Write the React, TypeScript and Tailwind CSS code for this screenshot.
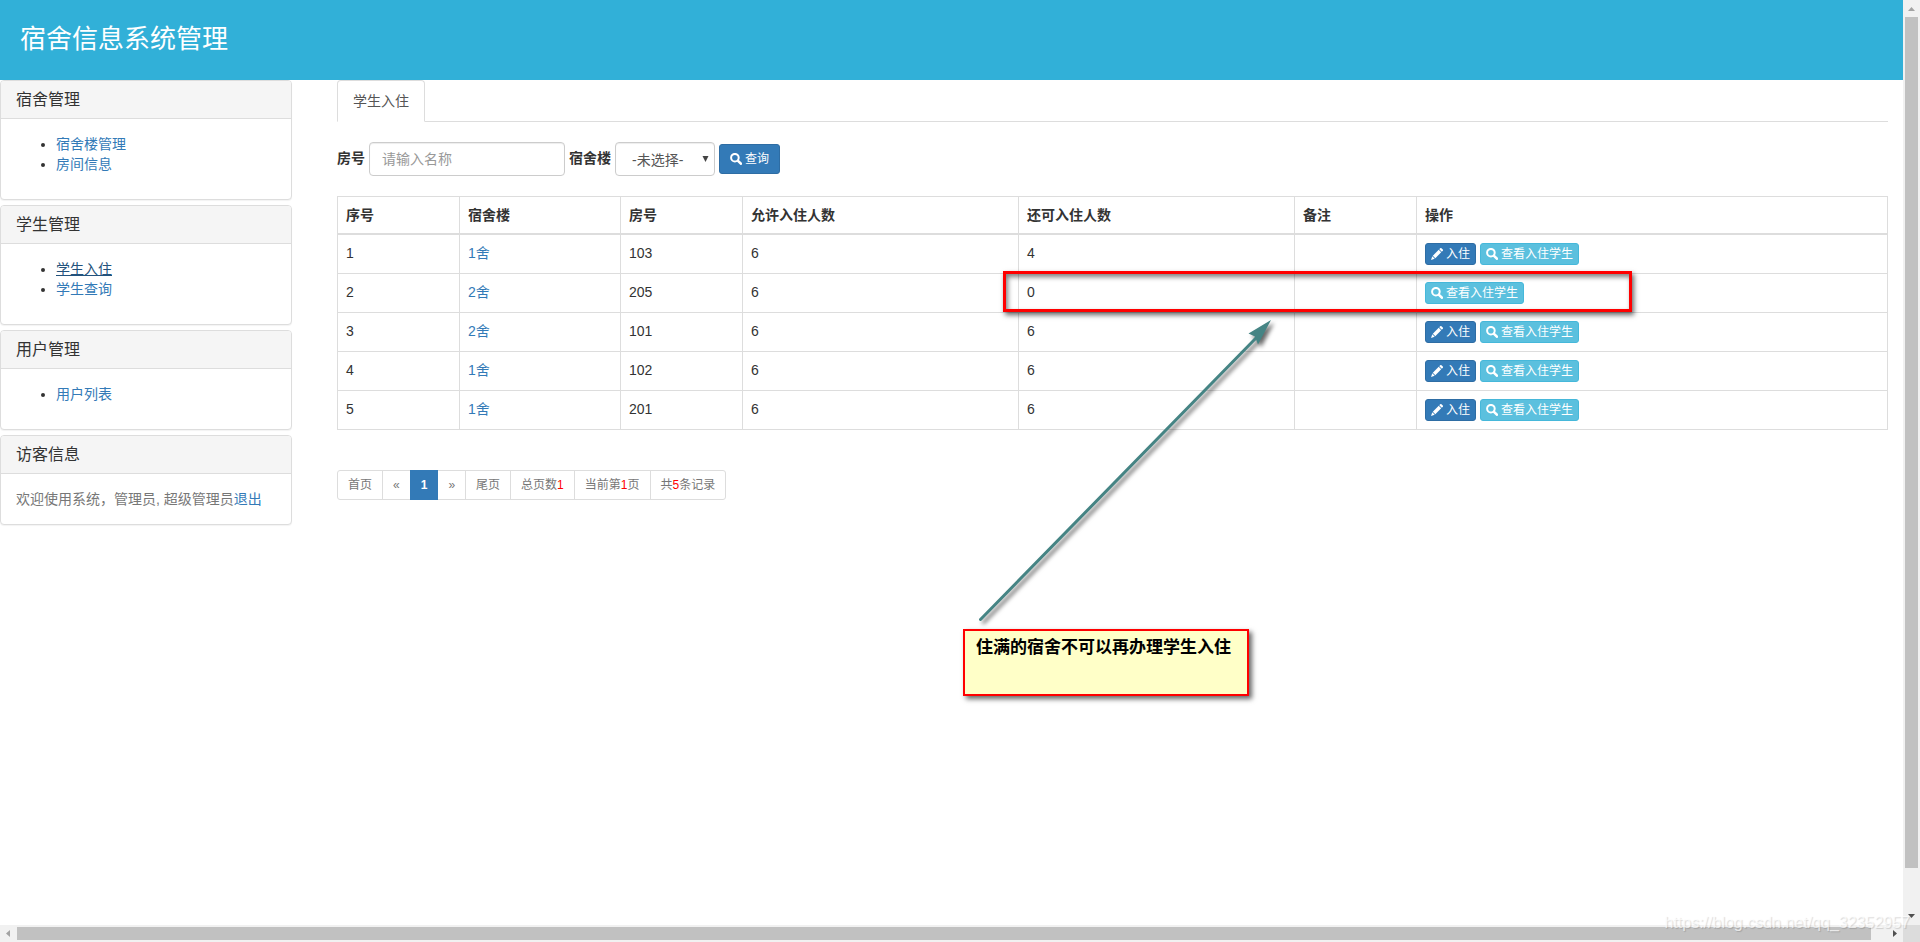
import type { ReactNode } from 'react'

interface Room {
  id: number
  building: string
  room: string
  capacity: number
  free: number
  remark: string
}

const ROOMS: Room[] = [
  { id: 1, building: '1舍', room: '103', capacity: 6, free: 4, remark: '' },
  { id: 2, building: '2舍', room: '205', capacity: 6, free: 0, remark: '' },
  { id: 3, building: '2舍', room: '101', capacity: 6, free: 6, remark: '' },
  { id: 4, building: '1舍', room: '102', capacity: 6, free: 6, remark: '' },
  { id: 5, building: '1舍', room: '201', capacity: 6, free: 6, remark: '' },
]

const MENUS = [
  { title: '宿舍管理', links: ['宿舍楼管理', '房间信息'] },
  { title: '学生管理', links: ['学生入住', '学生查询'] },
  { title: '用户管理', links: ['用户列表'] },
]

const ACTIVE_LINK = '学生入住'

const HEADERS = ['序号', '宿舍楼', '房号', '允许入住人数', '还可入住人数', '备注', '操作']

function SearchIcon() {
  return (
    <svg viewBox="0 0 12 12" className="h-3 w-3 shrink-0" aria-hidden="true">
      <circle cx="4.9" cy="4.7" r="3.8" fill="none" stroke="currentColor" strokeWidth="2" />
      <path d="M8 7.8 10.9 10.7" stroke="currentColor" strokeWidth="2.6" strokeLinecap="round" />
    </svg>
  )
}

function PencilIcon() {
  return (
    <svg viewBox="0 0 12 12" className="h-3 w-3 shrink-0" fill="currentColor" aria-hidden="true">
      <path d="M9.3.2a.8.8 0 0 1 1.1 0l1.4 1.4a.8.8 0 0 1 0 1.1l-1 1L8.3 1.2z" />
      <path d="M7.7 1.8 10.2 4.3 4.3 10.2 1.8 7.7z" />
      <path d="M1.3 8.3 3.7 10.7 0 12z" />
    </svg>
  )
}

function Panel({ title, children }: { title: string; children: ReactNode }) {
  return (
    <section className="rounded border border-[#ddd] bg-white shadow-[0_1px_1px_rgba(0,0,0,0.05)]">
      <h3 className="rounded-t-[3px] border-b border-[#ddd] bg-[#f5f5f5] px-[15px] py-[10px] text-base leading-[17px]">
        {title}
      </h3>
      <div className="p-[15px]">{children}</div>
    </section>
  )
}

function Sidebar() {
  return (
    <aside className="flex w-[292px] shrink-0 flex-col gap-[5px]">
      {MENUS.map(({ title, links }) => (
        <Panel key={title} title={title}>
          <ul className="mb-[10px] list-disc pl-10">
            {links.map((link) => (
              <li key={link}>
                <a href="#" className={link === ACTIVE_LINK ? 'text-[#23527c] underline' : 'text-[#337ab7]'}>
                  {link}
                </a>
              </li>
            ))}
          </ul>
        </Panel>
      ))}
      <Panel title="访客信息">
        <p className="text-[#777]">
          欢迎使用系统，管理员, 超级管理员<a href="#" className="text-[#337ab7]">退出</a>
        </p>
      </Panel>
    </aside>
  )
}

function SearchForm() {
  return (
    <form className="mt-5 flex items-center gap-1" onSubmit={(e) => e.preventDefault()}>
      <label htmlFor="room" className="pb-0.5 font-bold">房号</label>
      <input
        id="room"
        type="text"
        placeholder="请输入名称"
        className="h-[34px] w-[196px] rounded border border-[#ccc] px-3 text-[#555] shadow-[inset_0_1px_1px_rgba(0,0,0,0.075)] placeholder:text-[#999]"
      />
      <label htmlFor="building" className="pb-0.5 font-bold">宿舍楼</label>
      <div className="relative">
        <select
          id="building"
          className="h-[34px] w-[100px] appearance-none rounded border border-[#ccc] bg-white px-4 pt-0.5 text-[#555] shadow-[inset_0_1px_1px_rgba(0,0,0,0.075)]"
        >
          <option>-未选择-</option>
          <option>1舍</option>
          <option>2舍</option>
        </select>
        <svg viewBox="0 0 7 6" className="pointer-events-none absolute top-[14px] right-[6px] h-[6px] w-[7px]" aria-hidden="true">
          <path d="M.5 0h6l-3 6z" fill="#444" />
        </svg>
      </div>
      <button
        type="submit"
        className="flex h-[30px] items-center gap-[3px] rounded-[3px] border border-[#2e6da4] bg-[#337ab7] px-[10px] text-xs text-white"
      >
        <SearchIcon />
        查询
      </button>
    </form>
  )
}

function RoomTable() {
  return (
    <table className="mt-5 w-full table-fixed border-collapse border border-[#ddd]">
      <colgroup>
        <col className="w-[122px]" />
        <col className="w-[161px]" />
        <col className="w-[122px]" />
        <col className="w-[276px]" />
        <col className="w-[276px]" />
        <col className="w-[122px]" />
        <col />
      </colgroup>
      <thead>
        <tr>
          {HEADERS.map((h) => (
            <th key={h} className="border border-b-2 border-[#ddd] p-2 text-left font-bold">{h}</th>
          ))}
        </tr>
      </thead>
      <tbody>
        {ROOMS.map((r) => (
          <tr key={r.id} className="[&>td]:border [&>td]:border-[#ddd] [&>td]:p-2 [&>td]:align-top">
            <td>{r.id}</td>
            <td><a href="#" className="text-[#337ab7]">{r.building}</a></td>
            <td>{r.room}</td>
            <td>{r.capacity}</td>
            <td>{r.free}</td>
            <td>{r.remark}</td>
            <td>
              <div className="flex gap-1">
                {r.free > 0 && (
                  <button className="flex h-[22px] items-center gap-[3px] rounded-[3px] border border-[#2e6da4] bg-[#337ab7] px-[5px] text-xs text-white">
                    <PencilIcon />
                    入住
                  </button>
                )}
                <button className="flex h-[22px] items-center gap-[3px] rounded-[3px] border border-[#46b8da] bg-[#5bc0de] px-[5px] text-xs text-white">
                  <SearchIcon />
                  查看入住学生
                </button>
              </div>
            </td>
          </tr>
        ))}
      </tbody>
    </table>
  )
}

function Pagination() {
  return (
    <nav className="mt-10">
      <ul className="flex text-xs leading-[18px] text-[#777] [&>li]:-ml-px [&>li]:border [&>li]:border-[#ddd] [&>li]:px-[10px] [&>li]:py-[5px] [&>li:first-child]:ml-0 [&>li:first-child]:rounded-l-[3px] [&>li:last-child]:rounded-r-[3px]">
        <li><a href="#">首页</a></li>
        <li><a href="#">«</a></li>
        <li className="z-10 border-[#337ab7]! bg-[#337ab7] font-bold text-white">1</li>
        <li><a href="#">»</a></li>
        <li><a href="#">尾页</a></li>
        <li>总页数<span className="text-[#f00]">1</span></li>
        <li>当前第<span className="text-[#f00]">1</span>页</li>
        <li>共<span className="text-[#f00]">5</span>条记录</li>
      </ul>
    </nav>
  )
}

// Callout drawn over the page: frame, arrow and note
function Annotation() {
  return (
    <>
      <div className="pointer-events-none absolute top-[271px] left-[1003px] h-[41px] w-[629px] border-[3px] border-[#f00] shadow-[2px_3px_5px_rgba(0,0,0,0.6),inset_2px_3px_5px_rgba(0,0,0,0.5)]" />
      <svg
        viewBox="0 0 300 310"
        className="pointer-events-none absolute top-[315px] left-[975px] h-[310px] w-[300px] drop-shadow-[3px_3px_2px_rgba(0,0,0,0.6)]"
        aria-hidden="true"
      >
        <path d="M5.5 304.5 282 22" stroke="#458484" strokeWidth="3" strokeLinecap="round" />
        <path d="M296 5 273.500 18.500 280 21.500 283 29.500z" fill="#458484" />
      </svg>
      <div className="absolute top-[629px] left-[963px] h-[67px] w-[286px] border-2 border-[#f00] bg-[#ffffc8] px-[11px] py-[7px] text-[17px] leading-5 font-bold text-black shadow-[3px_3px_5px_rgba(0,0,0,0.6)]">
        住满的宿舍不可以再办理学生入住
      </div>
    </>
  )
}

function VerticalScrollbar() {
  return (
    <div className="flex flex-col bg-[#f1f1f1] px-[2px]" aria-hidden="true">
      <svg viewBox="0 0 13 17" className="h-[17px] w-[13px]"><path d="M3 11h7L6.5 7z" fill="#a3a3a3" /></svg>
      <div className="flex-1"><div className="h-[95.5%] bg-[#c1c1c1]" /></div>
      <svg viewBox="0 0 13 17" className="h-[17px] w-[13px]"><path d="M3 6h7l-3.500 4z" fill="#505050" /></svg>
    </div>
  )
}

function HorizontalScrollbar() {
  return (
    <div className="flex bg-[#f1f1f1] py-[2px]" aria-hidden="true">
      <svg viewBox="0 0 17 13" className="h-[13px] w-[17px]"><path d="M10 3v7L6 6.5z" fill="#a3a3a3" /></svg>
      <div className="flex-1"><div className="h-full w-[99.2%] bg-[#c1c1c1]" /></div>
      <svg viewBox="0 0 17 13" className="h-[13px] w-[17px]"><path d="M7 3v7l4-3.5z" fill="#505050" /></svg>
    </div>
  )
}

export default function App() {
  return (
    <div className="relative grid h-screen grid-cols-[1fr_17px] grid-rows-[1fr_17px] overflow-hidden bg-white font-['Liberation_Sans','Noto_Sans_CJK_SC',sans-serif] text-sm leading-5 text-[#333]">
      <div className="min-w-0 overflow-hidden">
        <header className="flex h-20 items-center bg-[#31b0d8] px-5">
          <h1 className="pb-0.5 text-[26px] leading-8 text-white">宿舍信息系统管理</h1>
        </header>
        <div className="flex gap-[45px] pr-[15px]">
          <Sidebar />
          <main className="min-w-0 flex-1">
            <div className="flex border-b border-[#ddd]">
              <a href="#" className="-mb-px rounded-t border border-[#ddd] border-b-white bg-white px-[15px] py-[10px] text-[#555]">
                学生入住
              </a>
            </div>
            <SearchForm />
            <RoomTable />
            <Pagination />
          </main>
        </div>
      </div>
      <VerticalScrollbar />
      <HorizontalScrollbar />
      <div className="bg-[#dcdcdc]" />
      <Annotation />
      <div className="pointer-events-none absolute right-[10px] bottom-[7px] text-base text-white/70 [text-shadow:1px_1px_1px_rgba(0,0,0,0.15)]">
        https://blog.csdn.net/qq_32352957
      </div>
    </div>
  )
}
